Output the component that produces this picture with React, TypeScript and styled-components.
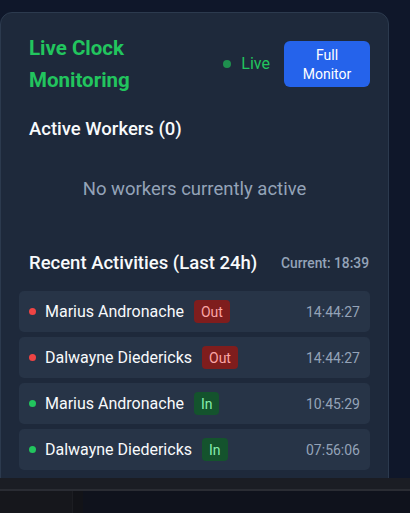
import React from "react";
import styled, { createGlobalStyle } from "styled-components";

const Global = createGlobalStyle`
  html, body { margin: 0; padding: 0; background: #0f172a; }
  body { font-family: Roboto, "Noto Sans", Arial, sans-serif; width: 410px; height: 513px; overflow: hidden; }
  * { box-sizing: border-box; }
`;

const Page = styled.div`
  width: 410px;
  height: 513px;
  display: flex;
  flex-direction: column;
  background: #0f172a;
`;

const Stage = styled.div`
  height: 478px;
  overflow: hidden;
  padding: 12px 21px 0 0;
`;

const Card = styled.div`
  width: 389px;
  min-height: 520px;
  background: #1e293b;
  border: 1px solid #2c3a4e;
  border-radius: 12px;
  padding: 19px 18px 18px 18px;
  display: flex;
  flex-direction: column;
`;

const Header = styled.div`
  display: flex;
  align-items: center;
  padding: 0 0 0 10px;
`;

const Title = styled.h2`
  flex: 1;
  min-width: 0;
  margin: 0;
  color: #22c55e;
  font-size: 20.5px;
  font-weight: 700;
  line-height: 32px;
  padding-right: 20px;
`;

const LiveGroup = styled.div`
  display: flex;
  align-items: center;
  gap: 14px;
`;

const LiveTag = styled.div`
  display: flex;
  align-items: center;
  gap: 10px;
  color: #22c55e;
  font-size: 16px;
  line-height: 20px;
`;

const Dot = styled.span<{ $color: string; $size: number }>`
  width: ${(p) => p.$size}px;
  height: ${(p) => p.$size}px;
  border-radius: 50%;
  background: ${(p) => p.$color};
  flex-shrink: 0;
`;

const MonitorButton = styled.button`
  width: 86px;
  height: 46px;
  border: none;
  border-radius: 6px;
  background: #2563eb;
  color: #ffffff;
  font-family: inherit;
  font-size: 14px;
  line-height: 19px;
  padding: 5px 12px 3px;
  text-align: center;
`;

const SectionTitle = styled.h3`
  margin: 0;
  color: #f8fafc;
  font-size: 18.5px;
  font-weight: 500;
  line-height: 28px;
`;

const ActiveSection = styled.div`
  padding: 0 0 0 10px;
  margin-top: 19px;
`;

const Empty = styled.div`
  text-align: center;
  color: #94a3b8;
  font-size: 18.5px;
  line-height: 28px;
  padding: 32px 0;
`;

const RecentHeader = styled.div`
  display: flex;
  align-items: center;
  justify-content: space-between;
  padding: 0 1px 0 10px;
  margin-top: 14px;
`;

const Current = styled.span`
  color: #94a3b8;
  font-size: 13.8px;
  font-weight: 500;
`;

const List = styled.div`
  display: flex;
  flex-direction: column;
  gap: 5px;
  margin-top: 14px;
`;

const Row = styled.div`
  display: flex;
  align-items: center;
  height: 41px;
  padding: 0 10px 0 10px;
  background: #273447;
  border-radius: 5px;
`;

const Name = styled.span`
  color: #f8fafc;
  font-size: 16px;
  margin-left: 9px;
`;

const Badge = styled.span<{ $in: boolean }>`
  margin-left: 10px;
  height: 23px;
  padding: 0 7px;
  border-radius: 4px;
  display: inline-flex;
  align-items: center;
  font-size: 14px;
  background: ${(p) => (p.$in ? "#14532d" : "#7f1d1d")};
  color: ${(p) => (p.$in ? "#86efac" : "#fca5a5")};
`;

const Time = styled.span`
  margin-left: auto;
  color: #94a3b8;
  font-size: 14px;
`;

const FooterBar = styled.div`
  height: 13px;
  background: #1b1d24;
  border-bottom: 2px solid #2a2c33;
`;

const FooterBottom = styled.div`
  flex: 1;
  display: flex;
`;

const FooterLeft = styled.div`
  width: 72px;
  background: #16171c;
`;

const FooterDivider = styled.div`
  width: 11px;
  background: #121318;
  border-left: 1px solid #1c1d22;
`;

const FooterRest = styled.div`
  flex: 1;
  background: #0f121c;
`;

const activities = [
  { name: "Marius Andronache", in: false, time: "14:44:27" },
  { name: "Dalwayne Diedericks", in: false, time: "14:44:27" },
  { name: "Marius Andronache", in: true, time: "10:45:29" },
  { name: "Dalwayne Diedericks", in: true, time: "07:56:06" },
];

export default function App() {
  return (
    <>
      <Global />
      <Page>
        <Stage>
          <Card>
            <Header>
              <Title>Live Clock Monitoring</Title>
              <LiveGroup>
                <LiveTag>
                  <Dot $color="#1f8f4e" $size={8} />
                  Live
                </LiveTag>
                <MonitorButton>Full Monitor</MonitorButton>
              </LiveGroup>
            </Header>
            <ActiveSection>
              <SectionTitle>Active Workers (0)</SectionTitle>
            </ActiveSection>
            <Empty>No workers currently active</Empty>
            <RecentHeader>
              <SectionTitle>Recent Activities (Last 24h)</SectionTitle>
              <Current>Current: 18:39</Current>
            </RecentHeader>
            <List>
              {activities.map((a, i) => (
                <Row key={i}>
                  <Dot $color={a.in ? "#22c55e" : "#ef4444"} $size={7} />
                  <Name>{a.name}</Name>
                  <Badge $in={a.in}>{a.in ? "In" : "Out"}</Badge>
                  <Time>{a.time}</Time>
                </Row>
              ))}
            </List>
          </Card>
        </Stage>
        <FooterBar />
        <FooterBottom>
          <FooterLeft />
          <FooterDivider />
          <FooterRest />
        </FooterBottom>
      </Page>
    </>
  );
}
